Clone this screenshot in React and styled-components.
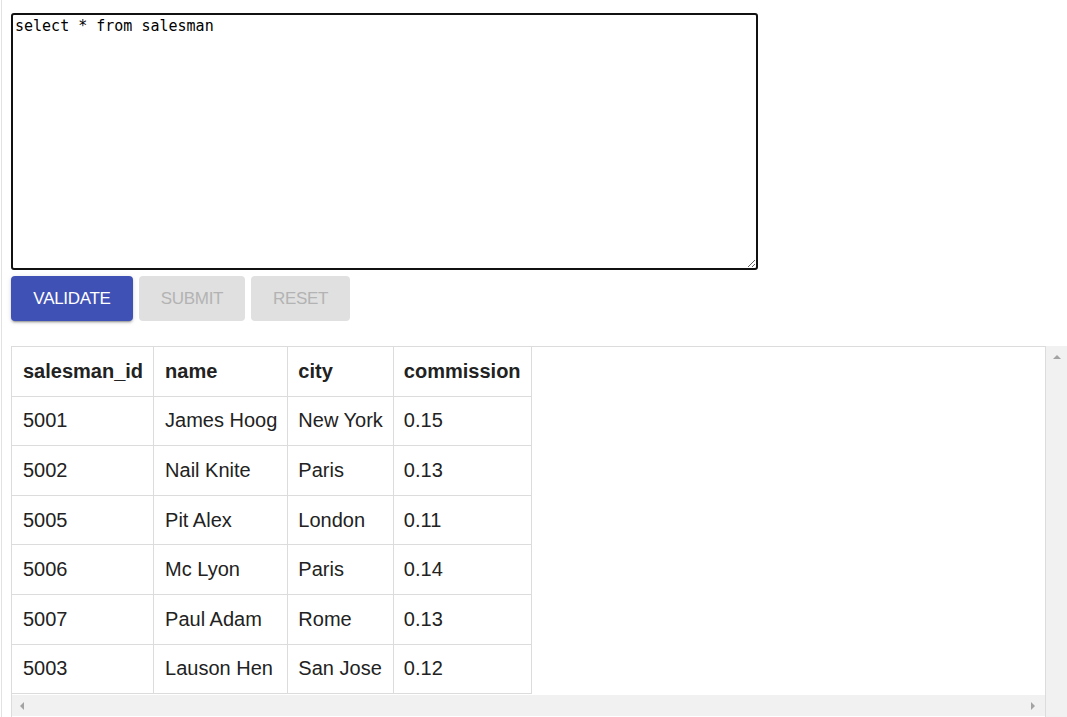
import React from "react"
import styled, { createGlobalStyle } from "styled-components"

const rows = [
  ["5001", "James Hoog", "New York", "0.15"],
  ["5002", "Nail Knite", "Paris", "0.13"],
  ["5005", "Pit Alex", "London", "0.11"],
  ["5006", "Mc Lyon", "Paris", "0.14"],
  ["5007", "Paul Adam", "Rome", "0.13"],
  ["5003", "Lauson Hen", "San Jose", "0.12"],
]

const columns = ["salesman_id", "name", "city", "commission"]

const GlobalStyle = createGlobalStyle`
  html, body {
    margin: 0;
    background: #fff;
    overflow: hidden;
  }
`

const Page = styled.div`
  margin-left: 1px;
  border-left: 1px solid #e2e2e2;
  padding: 13px 0 0 9px;
  height: 704px;
  font-family: "Liberation Sans", Arial, sans-serif;
`

const Editor = styled.textarea`
  display: block;
  box-sizing: border-box;
  width: 747px;
  height: 257px;
  margin: 0;
  padding: 2px 2px;
  border: 2px solid #111;
  border-radius: 3px;
  font-family: "DejaVu Sans Mono", "Liberation Mono", monospace;
  font-size: 15px;
  line-height: 18px;
  color: #000;
  outline: none;
`

const Actions = styled.div`
  display: flex;
  gap: 6px;
  margin-top: 6px;
`

const Button = styled.button`
  box-sizing: border-box;
  width: ${(p) => p.$w}px;
  height: 45px;
  border: 0;
  border-radius: 4px;
  font-family: "Liberation Sans", Arial, sans-serif;
  font-size: 17px;
  letter-spacing: -0.3px;
  text-transform: uppercase;
  background: ${(p) => (p.disabled ? "#e0e0e0" : "#3f51b5")};
  color: ${(p) => (p.disabled ? "#b3b3b3" : "#fff")};
  box-shadow: ${(p) =>
    p.disabled
      ? "none"
      : "0 3px 1px -2px rgba(0,0,0,.2), 0 2px 2px 0 rgba(0,0,0,.14), 0 1px 5px 0 rgba(0,0,0,.12)"};
`

const Results = styled.div`
  display: flex;
  margin-top: 25px;
`

const TableBox = styled.div`
  box-sizing: border-box;
  width: 1036px;
  border: 1px solid #dcdcdc;
  border-bottom: 0;
  display: flex;
  flex-direction: column;
  align-items: flex-start;
`

const Table = styled.table`
  border-collapse: collapse;
  color: #222;
  font-family: "Liberation Sans", Arial, sans-serif;
  font-size: 20px;

  th,
  td {
    border: 1px solid #dcdcdc;
    height: 48.6px;
    padding: 0 10px;
    text-align: left;
    white-space: nowrap;
  }
  th:nth-child(-n + 2),
  td:nth-child(-n + 2) {
    padding-left: 11px;
  }
  th {
    font-weight: bold;
  }
  tr:first-child th {
    border-top: 0;
  }
  th:first-child,
  td:first-child {
    border-left: 0;
  }
`

const Track = styled.div`
  background: #f1f1f1;
  display: flex;
  align-items: ${(p) => (p.$vertical ? "flex-start" : "center")};
  ${(p) =>
    p.$vertical
      ? "width: 21px; height: 371px; justify-content: center; padding-top: 6px; box-sizing: border-box;"
      : "align-self: stretch; justify-content: space-between; height: 21px; padding: 0 8px 0 6px; margin-top: 1px;"}
`

const Arrow = ({ dir }) => {
  const pts = {
    up: "0,7 4,3 8,7",
    left: "6,0 2,4 6,8",
    right: "2,0 6,4 2,8",
  }[dir]
  return (
    <svg width="8" height="8" viewBox="0 0 8 8">
      <polygon points={pts} fill="#a3a3a3" />
    </svg>
  )
}

export default function App() {
  return (
    <>
      <GlobalStyle />
      <Page>
        <Editor defaultValue="select * from salesman" spellCheck={false} />
        <Actions>
          <Button $w={122}>Validate</Button>
          <Button $w={106} disabled>
            Submit
          </Button>
          <Button $w={99} disabled>
            Reset
          </Button>
        </Actions>
        <Results>
          <TableBox>
            <Table>
              <thead>
                <tr>
                  {columns.map((c) => (
                    <th key={c}>{c}</th>
                  ))}
                </tr>
              </thead>
              <tbody>
                {rows.map((r) => (
                  <tr key={r[0]}>
                    {r.map((v, i) => (
                      <td key={i}>{v}</td>
                    ))}
                  </tr>
                ))}
              </tbody>
            </Table>
            <Track>
              <Arrow dir="left" />
              <Arrow dir="right" />
            </Track>
          </TableBox>
          <Track $vertical>
            <Arrow dir="up" />
          </Track>
        </Results>
      </Page>
    </>
  )
}
